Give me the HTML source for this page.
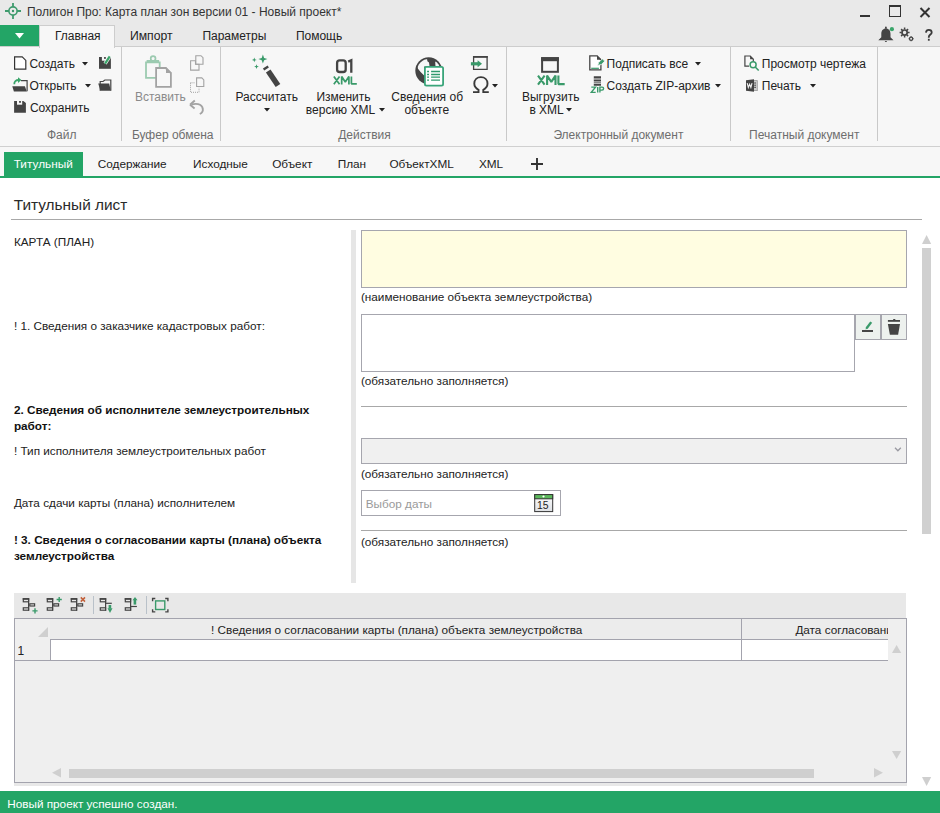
<!DOCTYPE html>
<html><head><meta charset="utf-8">
<style>
*{margin:0;padding:0;box-sizing:border-box}
html,body{width:940px;height:813px;overflow:hidden;background:#fff;font-family:"Liberation Sans",sans-serif;font-size:12px;color:#222;position:relative}
.a{position:absolute}
.t{position:absolute;white-space:nowrap;line-height:1}
svg{position:absolute;overflow:visible}
</style></head><body>
<div class="a" style="left:0px;top:0px;width:940px;height:47px;background:#e9e9e9"></div>
<svg style="left:0px;top:0px;" width="30" height="25" viewBox="0 0 30 25"><circle cx="13" cy="11" r="4.1" fill="none" stroke="#3f9b6e" stroke-width="1.6"/><circle cx="13" cy="11" r="1.2" fill="#3a9468"/><path d="M13 3v4M13 15V19M5 11h4M17 11H21" stroke="#3f9b6e" stroke-width="1.8"/></svg>
<div class="t" style="left:26.90px;top:5.84px;font-size:12px;color:#333;">Полигон Про: Карта план зон версии 01 - Новый проект*</div>
<div class="a" style="left:860px;top:14.5px;width:10px;height:2.5px;background:#333"></div>
<div class="a" style="left:889px;top:5px;width:12px;height:12px;border:1.2px solid #333;border-top-width:2px"></div>
<svg style="left:919px;top:7px;" width="12" height="11" viewBox="0 0 12 11"><path d="M1.5 1L10.5 10M10.5 1L1.5 10" stroke="#333" stroke-width="2"/></svg>
<svg style="left:876px;top:24px;" width="22" height="20" viewBox="0 0 22 20"><path d="M9.9 4.6c-3 0-4.6 2.3-4.6 5.5v3.2L2.3 16.2h15.2l-3-2.9v-3.2c0-3.2-1.6-5.5-4.6-5.5z" fill="#444"/><path d="M9 3.5a0.9 0.9 0 0 1 1.8 0v1.2H9z" fill="#444"/><path d="M8.8 17a1.1 1.1 0 0 0 2.2 0z" fill="#444"/><circle cx="15.9" cy="5.2" r="2.1" fill="#3aa56a"/></svg>
<svg style="left:898px;top:26px;" width="18" height="18" viewBox="0 0 18 18"><g fill="none" stroke="#444"><circle cx="6.6" cy="6.6" r="2.6" stroke-width="1.7"/><path d="M6.6 1.6v2M6.6 9.6v2M1.6 6.6h2M9.6 6.6h2M3.1 3.1l1.3 1.3M8.8 8.8l1.3 1.3M3.1 10.1l1.3-1.3M8.8 4.4l1.3-1.3" stroke-width="1.5"/><circle cx="13.1" cy="12.8" r="1.6" stroke-width="1.3"/><path d="M13.1 10.3v0.8M13.1 14.5v0.8M10.6 12.8h0.8M14.8 12.8h0.8" stroke-width="1.1"/></g></svg>
<svg style="left:920px;top:26px;" width="16" height="18" viewBox="0 0 16 18"><path d="M5.9 6.6C6.2 4.6 7.5 3.9 8.8 3.9c1.8 0 2.9 1.1 2.9 2.5 0 2-2.9 2.3-2.9 4.6v0.8" fill="none" stroke="#3a3a3a" stroke-width="1.8"/><rect x="7.9" y="12.8" width="1.8" height="1.9" fill="#3a3a3a"/></svg>
<div class="a" style="left:0px;top:25px;width:39px;height:22px;background:#23a566"></div>
<svg style="left:15px;top:33px;" width="9" height="6" viewBox="0 0 9 6"><path d="M0 0H9L4.5 5.5Z" fill="#fff"/></svg>
<div class="a" style="left:0px;top:46px;width:940px;height:101px;background:#f7f7f7;border-top:1px solid #cdcdcd;border-bottom:1px solid #d0d0d0"></div>
<div class="a" style="left:39px;top:25px;width:76px;height:23px;background:#f7f7f7;border:1px solid #cdcdcd;border-bottom:none"></div>
<div class="t" style="left:54.90px;top:29.84px;font-size:12px;color:#222;">Главная</div>
<div class="t" style="left:129.90px;top:29.67px;font-size:12.2px;color:#222;">Импорт</div>
<div class="t" style="left:202.40px;top:29.84px;font-size:12px;color:#222;">Параметры</div>
<div class="t" style="left:295.90px;top:29.84px;font-size:12px;color:#222;">Помощь</div>
<div class="a" style="left:121px;top:47px;width:1px;height:94px;background:#c9c9c9"></div>
<div class="a" style="left:220px;top:47px;width:1px;height:94px;background:#c9c9c9"></div>
<div class="a" style="left:506px;top:47px;width:1px;height:94px;background:#c9c9c9"></div>
<div class="a" style="left:730px;top:47px;width:1px;height:94px;background:#c9c9c9"></div>
<div class="a" style="left:877px;top:47px;width:1px;height:94px;background:#c9c9c9"></div>
<div class="t" style="left:46.90px;top:128.84px;font-size:12px;color:#6e6e6e;">Файл</div>
<div class="t" style="left:131.90px;top:128.84px;font-size:12px;color:#6e6e6e;">Буфер обмена</div>
<div class="t" style="left:338.20px;top:128.84px;font-size:12px;color:#6e6e6e;">Действия</div>
<div class="t" style="left:553.40px;top:128.84px;font-size:12px;color:#6e6e6e;">Электронный документ</div>
<div class="t" style="left:749.10px;top:128.84px;font-size:12px;color:#6e6e6e;">Печатный документ</div>
<svg style="left:13px;top:55px;" width="14" height="16" viewBox="0 0 14 16"><path d="M1.6 1.8h7.6l3.6 3.6v8.8H1.6z" fill="#fff" stroke="#333" stroke-width="1.2"/></svg>
<div class="t" style="left:29.40px;top:57.84px;font-size:12px;color:#222;">Создать</div>
<svg style="left:82px;top:62px;" width="6" height="4" viewBox="0 0 6 4"><path d="M0 0H6L3 3.5Z" fill="#222"/></svg>
<svg style="left:98px;top:55px;" width="14" height="15" viewBox="0 0 14 15"><path d="M1 2h11.9v11.8H1z" fill="#444"/><rect x="3.9" y="2" width="5.1" height="3.7" fill="#f7f7f7"/><rect x="6" y="2.1" width="1.9" height="1.7" fill="#444"/><path d="M11.7 1.3L7.1 8.6" stroke="#f7f7f7" stroke-width="3.6"/><path d="M11.7 1.3L7.1 8.6" stroke="#3aa56a" stroke-width="2.2"/></svg>
<svg style="left:11px;top:76px;" width="17" height="17" viewBox="0 0 17 17"><path d="M10 4.6h6.1v10.7" fill="none" stroke="#444" stroke-width="1.2"/><path d="M1.3 10.2h12.6l1.9 5.2H2.9z" fill="#444"/><path d="M3.3 8.3c-0.2-2.6 1.6-4.3 4.4-4.3" fill="none" stroke="#3aa56a" stroke-width="1.8"/><path d="M7 1.2l3.4 2.9L7 6.9z" fill="#3aa56a"/></svg>
<div class="t" style="left:29.40px;top:79.84px;font-size:12px;color:#222;">Открыть</div>
<svg style="left:84.5px;top:84px;" width="6" height="4" viewBox="0 0 6 4"><path d="M0 0H6L3 3.5Z" fill="#222"/></svg>
<svg style="left:97px;top:78px;" width="16" height="14" viewBox="0 0 16 14"><path d="M3.2 12.7V3.5h2.8l1.9-1.5h5.9v10.7" fill="none" stroke="#444" stroke-width="1.2"/><path d="M1.2 5.4h11l1.6 7.3H3.5z" fill="#444"/></svg>
<svg style="left:13px;top:100px;" width="14" height="14" viewBox="0 0 14 14"><path d="M1.1 1h9.2l2.6 2.1v9.7H1.1z" fill="#444"/><rect x="4" y="1" width="5.2" height="3.7" fill="#f7f7f7"/><rect x="6" y="1.1" width="2" height="1.6" fill="#444"/></svg>
<div class="t" style="left:29.90px;top:101.84px;font-size:12px;color:#222;">Сохранить</div>
<svg style="left:143px;top:54px;" width="32" height="34" viewBox="0 0 32 34"><path d="M3 8.4h13.7v15.5H3z" fill="none" stroke="#9ccab0" stroke-width="1.8"/><rect x="3.6" y="6" width="12.5" height="2.4" fill="#9ccab0"/><circle cx="10.1" cy="4.6" r="2.4" fill="none" stroke="#9ccab0" stroke-width="1.7"/><path d="M13.1 14h9.6l5.2 5.2v13.6H13.1z" fill="#f7f7f7" stroke="#a3a3a3" stroke-width="1.8"/><path d="M23 13.1l5.8 5.8H23z" fill="#a3a3a3"/></svg>
<div class="t" style="left:134.90px;top:90.84px;font-size:12px;color:#8a8a8a;">Вставить</div>
<svg style="left:189px;top:54px;" width="16" height="18" viewBox="0 0 16 18"><path d="M6.8 1.7h5.2l2 2v6.6H6.8z" fill="#f7f7f7" stroke="#a3a3a3" stroke-width="1.1"/><path d="M1.6 6.8h4.9v3.5h3.5V16.1H1.6z" fill="none" stroke="#a3a3a3" stroke-width="1.1"/></svg>
<svg style="left:189px;top:76px;" width="17" height="18" viewBox="0 0 17 18"><path d="M7.6 1.9h5.2l2 2v6.6H7.6z" fill="#f7f7f7" stroke="#a3a3a3" stroke-width="1.1"/><path d="M1.5 6.8h4.5M1.5 6.8v9.5h8.5v-4.5" fill="none" stroke="#a3a3a3" stroke-width="1" stroke-dasharray="1 1"/></svg>
<svg style="left:189px;top:99px;" width="16" height="17" viewBox="0 0 16 17"><path d="M2.5 5.5c3.5-1 10.5-1.5 11.3 4.5 0.4 2.8-1.5 4.3-3 5" fill="none" stroke="#a3a3a3" stroke-width="1.9"/><path d="M1 5.8L5.8 1.5M1 5.8l4.6 3.6" fill="none" stroke="#a3a3a3" stroke-width="1.9"/></svg>
<svg style="left:250px;top:52px;" width="32" height="36" viewBox="0 0 32 36"><path d="M12.9 16.5l4.7-3.1 1.3 2-4.7 3.1z" fill="#444"/><path d="M15.9 20.4l4.6-3 9.8 14.6-4.6 3z" fill="#444"/><g fill="#3a9a6a"><path d="M12.9 2.6l1.2 3.3 3.3 1.2-3.3 1.2-1.2 3.3-1.2-3.3-3.3-1.2 3.3-1.2z"/><path d="M4.3 5.5l0.65 1.75 1.75 0.65-1.75 0.65-0.65 1.75-0.65-1.75-1.75-0.65 1.75-0.65z"/><path d="M6.5 12.2l0.65 1.75 1.75 0.65-1.75 0.65-0.65 1.75-0.65-1.75-1.75-0.65 1.75-0.65z"/></g></svg>
<div class="t" style="left:235.40px;top:90.84px;font-size:12px;color:#222;">Рассчитать</div>
<svg style="left:263.5px;top:107.5px;" width="6" height="4" viewBox="0 0 6 4"><path d="M0 0H6L3 3.5Z" fill="#222"/></svg>
<svg style="left:335px;top:58px;" width="20" height="16" viewBox="0 0 20 16"><rect x="2.1" y="2.4" width="8.6" height="11.6" rx="2.6" fill="none" stroke="#444" stroke-width="2.3"/><path d="M13.2 3.6l3.1-1.3v12.4" fill="none" stroke="#444" stroke-width="2.3"/></svg>
<svg style="left:332.8px;top:76.4px;" width="27" height="11" viewBox="0 0 27 11"><g transform="scale(0.86)" fill="none" stroke="#3a9a6a" stroke-width="2.0" stroke-linejoin="bevel"><path d="M1 0.6L7.6 9.7M7.6 0.6L1 9.7M10.1 10V0.6l4.2 6.3 4.2-6.3V10M21.4 0.6v8.5h6.3"/></g></svg>
<div class="t" style="left:316.40px;top:90.84px;font-size:12px;color:#222;">Изменить</div>
<div class="t" style="left:305.80px;top:103.84px;font-size:12px;color:#222;">версию XML</div>
<svg style="left:378.5px;top:108px;" width="6" height="4" viewBox="0 0 6 4"><path d="M0 0H6L3 3.5Z" fill="#222"/></svg>
<svg style="left:412px;top:54px;" width="34" height="34" viewBox="0 0 34 34"><defs><clipPath id="gc"><circle cx="16.7" cy="16.7" r="11.6"/></clipPath></defs><circle cx="16.7" cy="16.7" r="13.4" fill="#444"/><g clip-path="url(#gc)" fill="#f7f7f7"><path d="M0 0H14.3L15.4 7.3 17 8.5 17.6 12.5H12.1V21.5L8.6 18 6 14.8 4.8 11.2 3.6 10V0z"/><path d="M23.6 0H34V12.5H23.5L23.2 8.2 24.6 6z"/></g><rect x="12.9" y="12.9" width="18.2" height="18.8" rx="1.6" fill="#fff" stroke="#3aa57a" stroke-width="1.8"/><path d="M15.1 17.5h1.9M19.1 17.5h8.9M15.1 20.5h1.9M19.1 20.5h8.9M15.1 23.2h1.9M19.1 23.2h8.9M15.1 26.2h1.9M19.1 26.2h8.9" stroke="#2f9a6e" stroke-width="1.3"/></svg>
<div class="t" style="left:391.30px;top:90.84px;font-size:12px;color:#222;">Сведения об</div>
<div class="t" style="left:404.40px;top:103.84px;font-size:12px;color:#222;">объекте</div>
<svg style="left:470px;top:55px;" width="18" height="16" viewBox="0 0 18 16"><path d="M3.6 4.3V14.4h13.5V1.6H3.6v2.7" fill="none" stroke="#444" stroke-width="1.3"/><rect x="3" y="1" width="14.7" height="1.8" fill="#444"/><path d="M0.9 8.8h7.2" stroke="#3a9a6a" stroke-width="3.2"/><path d="M7.6 5.3l4.4 3.5-4.4 3.5z" fill="#3a9a6a"/></svg>
<svg style="left:472px;top:76px;" width="18" height="18" viewBox="0 0 18 18"><path d="M1 16.1h5.5v-2.3C3.7 12.4 2.3 10 2.3 7.6c0-3.9 2.9-6.5 6.6-6.5s6.6 2.6 6.6 6.5c0 2.4-1.4 4.8-4.2 6.2v2.3H16.8" fill="none" stroke="#3a3a3a" stroke-width="1.9"/></svg>
<svg style="left:492.2px;top:84.2px;" width="6" height="4" viewBox="0 0 6 4"><path d="M0 0H6L3 3.5Z" fill="#222"/></svg>
<svg style="left:540px;top:56px;" width="20" height="18" viewBox="0 0 20 18"><rect x="2.1" y="2.2" width="15.8" height="13.6" fill="none" stroke="#444" stroke-width="2"/><rect x="1.1" y="1.2" width="17.8" height="4" fill="#444"/></svg>
<svg style="left:537px;top:74.8px;" width="31" height="13" viewBox="0 0 31 13"><g transform="scale(1.0)" fill="none" stroke="#3a9a6a" stroke-width="2.1" stroke-linejoin="bevel"><path d="M1 0.6L7.6 9.7M7.6 0.6L1 9.7M10.1 10V0.6l4.2 6.3 4.2-6.3V10M21.4 0.6v8.5h6.3"/></g></svg>
<div class="t" style="left:521.90px;top:90.84px;font-size:12px;color:#222;">Выгрузить</div>
<div class="t" style="left:529.40px;top:103.84px;font-size:12px;color:#222;">в XML</div>
<svg style="left:565.5px;top:108px;" width="6" height="4" viewBox="0 0 6 4"><path d="M0 0H6L3 3.5Z" fill="#222"/></svg>
<svg style="left:587px;top:54px;" width="20" height="18" viewBox="0 0 20 18"><path d="M2.8 1.9h7.2l3.9 3.9v10.1H2.8z" fill="#fff" stroke="#444" stroke-width="1.3"/><path d="M10 1.3l4.5 4.5H10z" fill="#444"/><path d="M4.2 14.3h7.7" stroke="#3a9a6a" stroke-width="1.2"/><path d="M10.6 11.4l1.2-3.2 3.6-3.3 2.4 2.2-3.4 3.4z" fill="#3a9a6a" stroke="#f7f7f7" stroke-width="0.8"/></svg>
<div class="t" style="left:606.60px;top:57.84px;font-size:12px;color:#222;">Подписать все</div>
<svg style="left:695px;top:62px;" width="6" height="4" viewBox="0 0 6 4"><path d="M0 0H6L3 3.5Z" fill="#222"/></svg>
<svg style="left:589px;top:75px;" width="17" height="19" viewBox="0 0 17 19"><path d="M4.8 2.2h7.2M4.8 5.6h7.2M4.8 9.8h7.2" stroke="#444" stroke-width="1.9"/><path d="M4.8 4h7.2M4.8 7.6h7.2" stroke="#888" stroke-width="1.3"/></svg>
<svg style="left:590px;top:86px;" width="16" height="8" viewBox="0 0 16 8"><g fill="none" stroke="#3a9a6a" stroke-width="1.4"><path d="M1.3 1.1h4.2L1.3 6.4h4.4M7.7 1v5.5M9.9 6.5V1.1h2.2a1.5 1.5 0 0 1 0 3H9.9"/></g></svg>
<div class="t" style="left:606.60px;top:79.84px;font-size:12px;color:#222;">Создать ZIP-архив</div>
<svg style="left:715px;top:84px;" width="6" height="4" viewBox="0 0 6 4"><path d="M0 0H6L3 3.5Z" fill="#222"/></svg>
<svg style="left:743px;top:54px;" width="18" height="18" viewBox="0 0 18 18"><path d="M6 12.2H1.9V2h5.2l3.2 3.2v2.3" fill="none" stroke="#444" stroke-width="1.2"/><path d="M7.1 1.4l3.8 3.8H7.1z" fill="#444"/><circle cx="10.1" cy="10.8" r="3" fill="none" stroke="#3a9a6a" stroke-width="1.5"/><path d="M12.2 13l3.5 3.5" stroke="#3a9a6a" stroke-width="1.6"/></svg>
<div class="t" style="left:761.80px;top:57.84px;font-size:12px;color:#222;">Просмотр чертежа</div>
<svg style="left:745px;top:79px;" width="14" height="14" viewBox="0 0 14 14"><rect x="8.4" y="1.6" width="3.9" height="10" fill="#ccc" stroke="#999" stroke-width="0.8"/><path d="M1 1.2L9 0.2v12.6L1 11.8z" fill="#444"/><path d="M9.2 4h1.8M9.2 6.2h1.8M9.2 8.3h1.8" stroke="#444" stroke-width="1"/><path d="M2.2 4.2l1.1 4.3 1.3-3.3 1.3 3.3 1.1-4.3" fill="none" stroke="#f2f2f2" stroke-width="1.1"/></svg>
<div class="t" style="left:761.80px;top:79.84px;font-size:12px;color:#222;">Печать</div>
<svg style="left:810px;top:84px;" width="6" height="4" viewBox="0 0 6 4"><path d="M0 0H6L3 3.5Z" fill="#222"/></svg>
<div class="a" style="left:0px;top:147px;width:940px;height:29px;background:#f7f7f7"></div>
<div class="a" style="left:0px;top:176px;width:940px;height:2px;background:#23a566"></div>
<div class="a" style="left:4px;top:152px;width:79px;height:24px;background:#23a566"></div>
<div class="t" style="left:13.70px;top:159.01px;font-size:11.8px;color:#fff;">Титульный</div>
<div class="t" style="left:97.70px;top:159.01px;font-size:11.8px;color:#222;">Содержание</div>
<div class="t" style="left:193.00px;top:159.01px;font-size:11.8px;color:#222;">Исходные</div>
<div class="t" style="left:272.20px;top:159.01px;font-size:11.8px;color:#222;">Объект</div>
<div class="t" style="left:337.70px;top:159.01px;font-size:11.8px;color:#222;">План</div>
<div class="t" style="left:389.40px;top:159.01px;font-size:11.8px;color:#222;">ОбъектXML</div>
<div class="t" style="left:478.90px;top:159.01px;font-size:11.8px;color:#222;">XML</div>
<svg style="left:530px;top:157px;" width="14" height="14" viewBox="0 0 14 14"><path d="M7 1v12M1 7h12" stroke="#333" stroke-width="1.9"/></svg>
<div class="t" style="left:13.70px;top:196.96px;font-size:15.4px;color:#2a2a2a;">Титульный лист</div>
<div class="a" style="left:11px;top:219px;width:911px;height:1px;background:#a8a8a8"></div>
<div class="t" style="left:13.90px;top:236.05px;font-size:11.75px;color:#222;">КАРТА (ПЛАН)</div>
<div class="t" style="left:13.90px;top:320.05px;font-size:11.75px;color:#222;">! 1. Сведения о заказчике кадастровых работ:</div>
<div class="t" style="left:13.90px;top:404.05px;font-size:11.75px;color:#111;font-weight:bold;">2. Сведения об исполнителе землеустроительных</div>
<div class="t" style="left:13.90px;top:420.05px;font-size:11.75px;color:#111;font-weight:bold;">работ:</div>
<div class="t" style="left:13.90px;top:445.05px;font-size:11.75px;color:#222;">! Тип исполнителя землеустроительных работ</div>
<div class="t" style="left:13.90px;top:497.05px;font-size:11.75px;color:#222;">Дата сдачи карты (плана) исполнителем</div>
<div class="t" style="left:13.90px;top:534.05px;font-size:11.75px;color:#111;font-weight:bold;">! 3. Сведения о согласовании карты (плана) объекта</div>
<div class="t" style="left:13.90px;top:550.05px;font-size:11.75px;color:#111;font-weight:bold;">землеустройства</div>
<div class="a" style="left:351px;top:230px;width:5px;height:353px;background:#e6e6e6"></div>
<div class="a" style="left:361px;top:230px;width:546px;height:58px;background:#fffde1;border:1px solid #a6a6ae"></div>
<div class="t" style="left:360.90px;top:291.05px;font-size:11.75px;color:#222;">(наименование объекта землеустройства)</div>
<div class="a" style="left:361px;top:314px;width:494px;height:58px;background:#fff;border:1px solid #a6a6ae"></div>
<div class="a" style="left:855px;top:314px;width:26px;height:26px;background:#edf1ee;border:1px solid #a6a6ae"></div>
<div class="a" style="left:881px;top:314px;width:26px;height:26px;background:#edf1ee;border:1px solid #a6a6ae"></div>
<svg style="left:860px;top:318px;" width="16" height="16" viewBox="0 0 16 16"><rect x="2" y="12.1" width="11" height="1.8" fill="#333"/><path d="M6.6 10.3l4.6-6.2" stroke="#3a9a6a" stroke-width="2.4"/><path d="M5.6 11.4l0.3-2 1.6 1.2z" fill="#3a9a6a"/></svg>
<svg style="left:886px;top:318px;" width="16" height="18" viewBox="0 0 16 18"><rect x="1.9" y="2" width="12.1" height="1.8" fill="#444"/><rect x="7.2" y="1" width="2.1" height="1.3" fill="#444"/><path d="M1.9 6H14L12.1 16.7H3.9z" fill="#444"/></svg>
<div class="t" style="left:360.90px;top:375.05px;font-size:11.75px;color:#222;">(обязательно заполняется)</div>
<div class="a" style="left:361px;top:406px;width:546px;height:1px;background:#a8a8a8"></div>
<div class="a" style="left:361px;top:438px;width:546px;height:26px;background:#f0f0f0;border:1px solid #a6a6ae"></div>
<svg style="left:894px;top:446px;" width="8" height="7" viewBox="0 0 8 7"><path d="M1 1.8l2.9 3 2.9-3" fill="none" stroke="#9a9aa2" stroke-width="1.3"/></svg>
<div class="t" style="left:360.90px;top:468.05px;font-size:11.75px;color:#222;">(обязательно заполняется)</div>
<div class="a" style="left:361px;top:490px;width:200px;height:26px;background:#fff;border:1px solid #a6a6ae"></div>
<div class="t" style="left:365.70px;top:498.05px;font-size:11.75px;color:#9a9a9a;">Выбор даты</div>
<svg style="left:534px;top:494px;" width="19" height="18" viewBox="0 0 19 18"><defs><linearGradient id="cg" x1="0" y1="0" x2="0" y2="1"><stop offset="0" stop-color="#fff"/><stop offset="1" stop-color="#dde0e4"/></linearGradient></defs><rect x="0.7" y="0.6" width="18" height="17" fill="url(#cg)" stroke="#333" stroke-width="1"/><rect x="0.7" y="0.6" width="18" height="4.2" fill="#5cb85c" stroke="#333" stroke-width="1"/><circle cx="9.5" cy="2.5" r="1.1" fill="#fff"/></svg>
<div class="t" style="left:537.00px;top:500.50px;font-size:10.4px;color:#222;">15</div>
<div class="a" style="left:361px;top:530px;width:546px;height:1px;background:#a8a8a8"></div>
<div class="t" style="left:360.90px;top:536.05px;font-size:11.75px;color:#222;">(обязательно заполняется)</div>
<svg style="left:922px;top:235px;" width="10" height="9" viewBox="0 0 10 9"><path d="M0 9L4.6 0 9.2 9z" fill="#cfcfcf"/></svg>
<div class="a" style="left:922px;top:248px;width:9px;height:286px;background:#d0d0d0"></div>
<svg style="left:922px;top:777px;" width="10" height="9" viewBox="0 0 10 9"><path d="M0 0L4.6 9 9.2 0z" fill="#cfcfcf"/></svg>
<div class="a" style="left:14px;top:593px;width:892px;height:26px;background:#e8e8e8"></div>
<svg style="left:21.5px;top:597px;" width="18" height="17" viewBox="0 0 18 17"><g fill="none" stroke="#444" stroke-width="1.2"><rect x="1.3" y="1.9" width="5.3" height="2.9"/><rect x="1.3" y="10.8" width="5.3" height="2.4"/><path d="M6.6 1.2V13.8"/></g><rect x="0.7" y="1.1" width="6.5" height="1.6" fill="#444"/><rect x="7.8" y="6.8" width="4.8" height="2.2" fill="none" stroke="#444" stroke-width="1.2"/><path d="M13 11.3v5.2M10.4 13.9h5.2" stroke="#3a9a6a" stroke-width="1.4"/></svg>
<svg style="left:45.5px;top:597px;" width="18" height="17" viewBox="0 0 18 17"><g fill="none" stroke="#444" stroke-width="1.2"><rect x="1.3" y="1.9" width="5.3" height="2.9"/><rect x="1.3" y="10.8" width="5.3" height="2.4"/><path d="M6.6 1.2V13.8"/></g><rect x="0.7" y="1.1" width="6.5" height="1.6" fill="#444"/><rect x="7.8" y="6.8" width="4.8" height="2.2" fill="none" stroke="#444" stroke-width="1.2"/><path d="M13.2 0v5.1M10.6 2.5h5.2" stroke="#3a9a6a" stroke-width="1.4"/></svg>
<svg style="left:69.5px;top:597px;" width="18" height="17" viewBox="0 0 18 17"><g fill="none" stroke="#444" stroke-width="1.2"><rect x="1.3" y="1.9" width="5.3" height="2.9"/><rect x="1.3" y="10.8" width="5.3" height="2.4"/><path d="M6.6 1.2V13.8"/></g><rect x="0.7" y="1.1" width="6.5" height="1.6" fill="#444"/><rect x="7.8" y="6.8" width="4.8" height="2.2" fill="none" stroke="#444" stroke-width="1.2"/><path d="M10.8 0.4l4.2 4.2M15 0.4l-4.2 4.2" stroke="#c2603a" stroke-width="1.5"/></svg>
<div class="a" style="left:93px;top:596px;width:1px;height:18px;background:#b9c1c9"></div>
<svg style="left:98.5px;top:597px;" width="18" height="17" viewBox="0 0 18 17"><g fill="none" stroke="#444" stroke-width="1.2"><rect x="1.3" y="1.9" width="5.3" height="2.9"/><rect x="1.3" y="10.8" width="5.3" height="2.4"/><path d="M6.6 1.2V13.8"/></g><rect x="0.7" y="1.1" width="6.5" height="1.6" fill="#444"/><path d="M6.6 6.3h6.2" stroke="#444" stroke-width="1.2"/><path d="M10.9 8v3.6" stroke="#3a9a6a" stroke-width="2.6"/><path d="M8.5 11.3h5L11 15.9z" fill="#3a9a6a"/></svg>
<svg style="left:124px;top:597px;" width="18" height="17" viewBox="0 0 18 17"><g fill="none" stroke="#444" stroke-width="1.2"><rect x="1.3" y="1.9" width="5.3" height="2.9"/><rect x="1.3" y="10.8" width="5.3" height="2.4"/><path d="M6.6 1.2V13.8"/></g><rect x="0.7" y="1.1" width="6.5" height="1.6" fill="#444"/><path d="M6.6 9.5h6.3" stroke="#444" stroke-width="1.2"/><path d="M10.9 7.6V3" stroke="#3a9a6a" stroke-width="2.6"/><path d="M8.5 3.2h5L11 0z" fill="#3a9a6a"/></svg>
<div class="a" style="left:146px;top:596px;width:1px;height:18px;background:#b9c1c9"></div>
<svg style="left:151px;top:597px;" width="18" height="17" viewBox="0 0 18 17"><path d="M1.6 4.2V1.5h2.7M14.2 1.5h2.7v2.7M16.9 12.2v2.7h-2.7M4.3 14.9H1.6v-2.7" fill="none" stroke="#444" stroke-width="1.4"/><rect x="4.6" y="3.9" width="9.2" height="8.6" fill="none" stroke="#3a9a6a" stroke-width="1.4"/></svg>
<div class="a" style="left:14px;top:782px;width:893px;height:4px;background:#e8e8e8"></div>
<div class="a" style="left:14px;top:618px;width:893px;height:165px;background:#efefef;border:1px solid #a3a3ad"></div>
<div class="a" style="left:15px;top:619px;width:35px;height:41px;background:#efefef"></div>
<div class="a" style="left:50px;top:619px;width:838px;height:21px;background:#ececec;border-bottom:1px solid #a3a3ad"></div>
<svg style="left:38px;top:627px;" width="10" height="10" viewBox="0 0 10 10"><path d="M10 0V10H0z" fill="#cfcfcf"/></svg>
<div class="t" style="left:211.10px;top:624.05px;font-size:11.75px;color:#222;">! Сведения о согласовании карты (плана) объекта землеустройства</div>
<div class="a" style="left:741px;top:619px;width:1px;height:41px;background:#a3a3ad"></div>
<div class="a" style="left:742px;top:619px;width:146px;height:20px;overflow:hidden">
<div class="t" style="left:53.40px;top:5.05px;font-size:11.75px;color:#222;">Дата согласовани</div>
</div>
<div class="a" style="left:15px;top:660px;width:873px;height:1px;background:#a3a3ad"></div>
<div class="a" style="left:50px;top:640px;width:838px;height:20px;background:#fff;border-left:1px solid #a3a3ad"></div>
<div class="a" style="left:741px;top:640px;width:1px;height:20px;background:#a3a3ad"></div>
<div class="t" style="left:17.60px;top:644.84px;font-size:12px;color:#222;">1</div>
<svg style="left:892px;top:645px;" width="10" height="8" viewBox="0 0 10 8"><path d="M0 8L4.6 0 9.2 8z" fill="#cfcfcf"/></svg>
<svg style="left:892px;top:751px;" width="10" height="8" viewBox="0 0 10 8"><path d="M0 0L4.6 8 9.2 0z" fill="#cfcfcf"/></svg>
<svg style="left:52px;top:768px;" width="9" height="10" viewBox="0 0 9 10"><path d="M9 0V9.5L0 4.75z" fill="#cfcfcf"/></svg>
<div class="a" style="left:69px;top:769px;width:745px;height:9px;background:#cfcfcf"></div>
<svg style="left:874px;top:768px;" width="9" height="10" viewBox="0 0 9 10"><path d="M0 0V9.5L9 4.75z" fill="#cfcfcf"/></svg>
<div class="a" style="left:0px;top:791px;width:940px;height:22px;background:#23a566"></div>
<div class="t" style="left:7.20px;top:798.05px;font-size:11.75px;color:#fff;">Новый проект успешно создан.</div>
</body></html>
